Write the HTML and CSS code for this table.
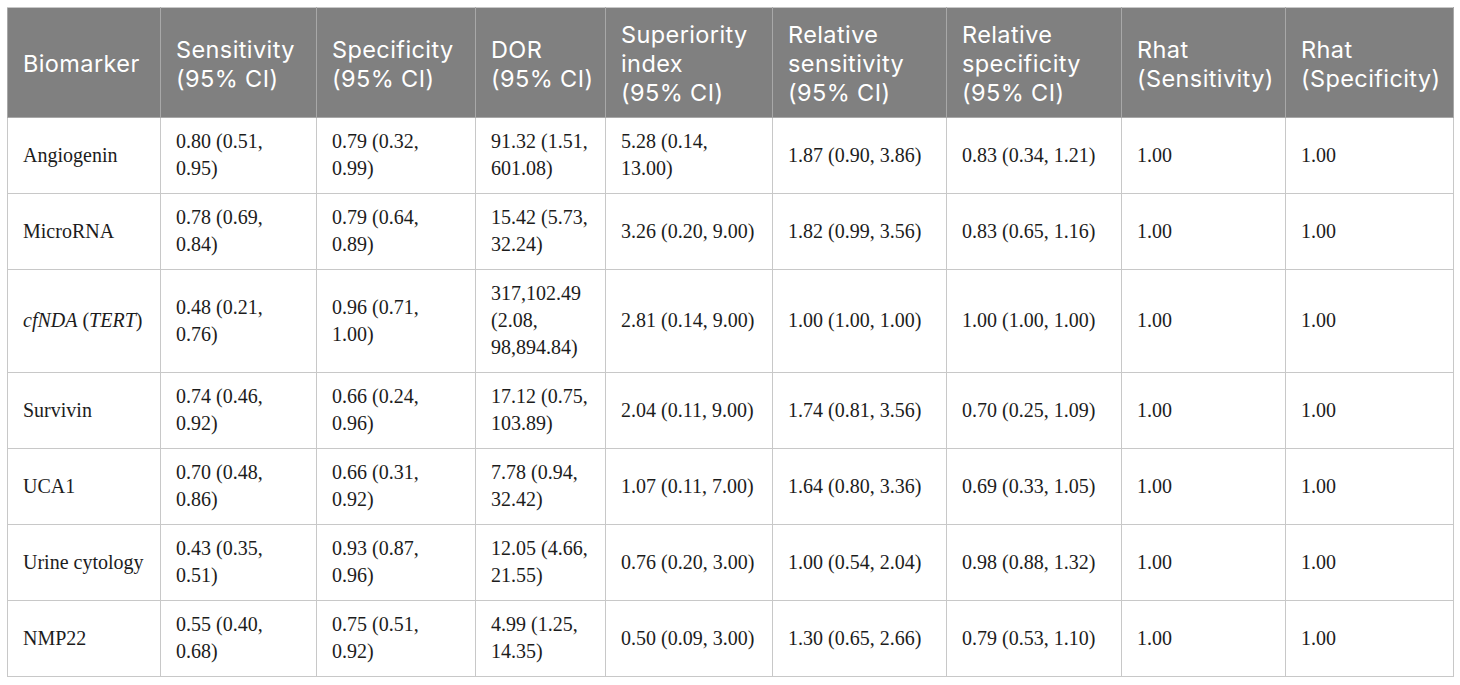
FILE: index.html
```html
<!DOCTYPE html>
<html lang="en">
<head>
<meta charset="utf-8">
<title>Biomarker diagnostic accuracy</title>
<link rel="stylesheet" href="styles.css">
</head>
<body>
<div class="wrap">
<table class="data">
  <colgroup>
    <col class="c1"><col class="c2"><col class="c3"><col class="c4"><col class="c5"><col class="c6"><col class="c7"><col class="c8"><col class="c9">
  </colgroup>
  <thead>
    <tr>
      <th>Biomarker</th>
      <th>Sensitivity<br>(95% CI)</th>
      <th>Specificity<br>(95% CI)</th>
      <th>DOR<br>(95% CI)</th>
      <th>Superiority<br>index<br>(95% CI)</th>
      <th>Relative<br>sensitivity<br>(95% CI)</th>
      <th>Relative<br>specificity<br>(95% CI)</th>
      <th>Rhat<br>(Sensitivity)</th>
      <th>Rhat<br>(Specificity)</th>
    </tr>
  </thead>
  <tbody>
    <tr>
      <td>Angiogenin</td>
      <td>0.80 (0.51, 0.95)</td>
      <td>0.79 (0.32, 0.99)</td>
      <td>91.32 (1.51, 601.08)</td>
      <td>5.28 (0.14, 13.00)</td>
      <td>1.87 (0.90, 3.86)</td>
      <td>0.83 (0.34, 1.21)</td>
      <td>1.00</td>
      <td>1.00</td>
    </tr>
    <tr>
      <td>MicroRNA</td>
      <td>0.78 (0.69, 0.84)</td>
      <td>0.79 (0.64, 0.89)</td>
      <td>15.42 (5.73, 32.24)</td>
      <td>3.26 (0.20, 9.00)</td>
      <td>1.82 (0.99, 3.56)</td>
      <td>0.83 (0.65, 1.16)</td>
      <td>1.00</td>
      <td>1.00</td>
    </tr>
    <tr>
      <td><i>cfNDA</i> (<i>TERT</i>)</td>
      <td>0.48 (0.21, 0.76)</td>
      <td>0.96 (0.71, 1.00)</td>
      <td>317,102.49 (2.08, 98,894.84)</td>
      <td>2.81 (0.14, 9.00)</td>
      <td>1.00 (1.00, 1.00)</td>
      <td>1.00 (1.00, 1.00)</td>
      <td>1.00</td>
      <td>1.00</td>
    </tr>
    <tr>
      <td>Survivin</td>
      <td>0.74 (0.46, 0.92)</td>
      <td>0.66 (0.24, 0.96)</td>
      <td>17.12 (0.75, 103.89)</td>
      <td>2.04 (0.11, 9.00)</td>
      <td>1.74 (0.81, 3.56)</td>
      <td>0.70 (0.25, 1.09)</td>
      <td>1.00</td>
      <td>1.00</td>
    </tr>
    <tr>
      <td>UCA1</td>
      <td>0.70 (0.48, 0.86)</td>
      <td>0.66 (0.31, 0.92)</td>
      <td>7.78 (0.94, 32.42)</td>
      <td>1.07 (0.11, 7.00)</td>
      <td>1.64 (0.80, 3.36)</td>
      <td>0.69 (0.33, 1.05)</td>
      <td>1.00</td>
      <td>1.00</td>
    </tr>
    <tr>
      <td>Urine cytology</td>
      <td>0.43 (0.35, 0.51)</td>
      <td>0.93 (0.87, 0.96)</td>
      <td>12.05 (4.66, 21.55)</td>
      <td>0.76 (0.20, 3.00)</td>
      <td>1.00 (0.54, 2.04)</td>
      <td>0.98 (0.88, 1.32)</td>
      <td>1.00</td>
      <td>1.00</td>
    </tr>
    <tr>
      <td>NMP22</td>
      <td>0.55 (0.40, 0.68)</td>
      <td>0.75 (0.51, 0.92)</td>
      <td>4.99 (1.25, 14.35)</td>
      <td>0.50 (0.09, 3.00)</td>
      <td>1.30 (0.65, 2.66)</td>
      <td>0.79 (0.53, 1.10)</td>
      <td>1.00</td>
      <td>1.00</td>
    </tr>
  </tbody>
</table>
</div>
</body>
</html>
```

FILE: styles.css
```css
html, body {
  margin: 0;
  padding: 0;
  background: #ffffff;
}

.wrap {
  padding: 7px;
}

.data {
  border-collapse: collapse;
  table-layout: fixed;
  width: 1446px;
}

.c1 { width: 153px; }
.c2 { width: 156px; }
.c3 { width: 159px; }
.c4 { width: 130px; }
.c5 { width: 167px; }
.c6 { width: 174px; }
.c7 { width: 175px; }
.c8 { width: 164px; }
.c9 { width: 168px; }

.data th,
.data td {
  border: 1px solid #c8c8c8;
  text-align: left;
  vertical-align: middle;
}

.data th {
  background: #808080;
  color: #ffffff;
  font-family: "Inter", "Open Sans", sans-serif;
  font-weight: 400;
  font-size: 23.5px;
  letter-spacing: 0.4px;
  line-height: 29px;
  white-space: nowrap;
  padding: 12px 2px 10px 15px;
  border-color: #a8a8a8;
  border-top-color: #c8c8c8;
}

.data td {
  color: #1c1c1c;
  font-family: "Liberation Serif", "Times New Roman", serif;
  font-size: 20px;
  line-height: 27px;
  padding: 10px 15px 11px 15px;
}

.data td i {
  font-style: italic;
}
```
